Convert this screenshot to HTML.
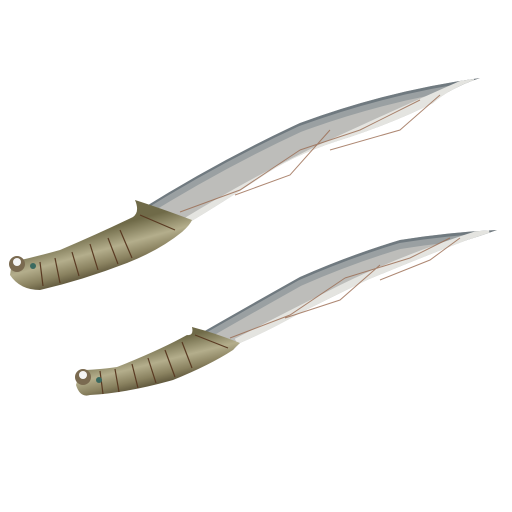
<!DOCTYPE html>
<html><head><meta charset="utf-8"><style>html,body{margin:0;padding:0;background:#fff;width:512px;height:512px;overflow:hidden}</style></head>
<body>
<svg width="512" height="512" viewBox="0 0 512 512" xmlns="http://www.w3.org/2000/svg">
<defs>
<clipPath id="c1"><path d="M135,200 L140,210 Q220,160 300,123 Q390,90 480,78 Q450,88 433,103 Q400,120 350,137 Q300,152 267,173 Q230,198 190,222 L182,232 Z"/></clipPath>
<clipPath id="c2"><path d="M192,327 L196,336 Q250,305 300,277 Q350,255 400,240 Q450,232 497,230 Q480,236 467,240 Q420,258 367,280 Q330,298 300,313 Q270,330 240,343 L233,350 Z"/></clipPath>
<linearGradient id="hd1" gradientUnits="userSpaceOnUse" x1="92" y1="232" x2="104" y2="275">
<stop offset="0" stop-color="#6f6a48"/><stop offset="0.45" stop-color="#b4ae8c"/><stop offset="0.75" stop-color="#8a8260"/><stop offset="1" stop-color="#5a5238"/>
</linearGradient>
<linearGradient id="hd2" gradientUnits="userSpaceOnUse" x1="150" y1="345" x2="160" y2="385">
<stop offset="0" stop-color="#6f6a48"/><stop offset="0.45" stop-color="#b4ae8c"/><stop offset="0.75" stop-color="#8a8260"/><stop offset="1" stop-color="#5a5238"/>
</linearGradient>
</defs>
<!-- sword 1 -->
<g clip-path="url(#c1)">
<rect x="130" y="70" width="360" height="170" fill="#bdbdba"/>
<path d="M140,210 Q220,160 300,123 Q390,90 480,78" stroke="#707a80" stroke-width="12" fill="none"/>
<path d="M140,216 Q220,166 300,129 Q390,96 480,84" stroke="#9aa0a2" stroke-width="6" fill="none"/>
<path d="M185,226 Q250,186 320,152 Q400,115 475,82" stroke="#e4e4e0" stroke-width="14" fill="none"/>
</g>
<path d="M180,212 L240,190 L300,150 M235,195 L290,175 L330,130 M300,150 L360,130 L420,100 M330,150 L400,130 L440,95" stroke="#9a6a50" stroke-width="1" fill="none" opacity="0.8"/>
<path d="M135,200 Q140,212 133,217 Q100,233 60,250 Q35,257 12,262 L10,275 Q20,290 40,290 Q83,280 127,263 Q160,250 182,232 Q190,225 192,220 Q160,208 135,200 Z" fill="url(#hd1)"/>
<g stroke="#5a3a22" stroke-width="1.2" fill="none">
<path d="M40,262 L43,286 M55,258 L60,283 M72,252 L79,276 M90,244 L98,270 M108,238 L118,264 M120,230 L132,258 M140,215 L175,230"/>
</g>
<circle cx="17" cy="264" r="8" fill="#7a6a50"/>
<circle cx="17" cy="262" r="4" fill="#f4f4f4"/>
<circle cx="33" cy="266" r="3" fill="#3a6a60"/>
<!-- sword 2 -->
<g clip-path="url(#c2)">
<rect x="185" y="220" width="320" height="140" fill="#bdbdba"/>
<path d="M196,336 Q250,305 300,277 Q350,255 400,240 Q450,232 497,230" stroke="#707a80" stroke-width="12" fill="none"/>
<path d="M196,342 Q250,311 300,283 Q350,261 400,246 Q450,238 497,236" stroke="#9aa0a2" stroke-width="6" fill="none"/>
<path d="M238,345 Q290,318 330,298 Q400,262 490,234" stroke="#e4e4e0" stroke-width="14" fill="none"/>
</g>
<path d="M230,338 L290,315 L345,278 M285,318 L340,300 L380,265 M345,278 L410,258 L450,238 M380,280 L430,260 L460,238" stroke="#9a6a50" stroke-width="1" fill="none" opacity="0.8"/>
<path d="M192,327 Q194,336 187,335 Q160,350 117,367 Q95,370 80,370 L76,385 Q80,398 90,395 Q127,393 173,380 Q210,365 233,350 Q236,346 240,343 Q215,333 192,327 Z" fill="url(#hd2)"/>
<g stroke="#5a3a22" stroke-width="1.2" fill="none">
<path d="M100,371 L103,394 M115,369 L119,392 M132,364 L138,388 M148,358 L156,383 M165,350 L175,377 M182,342 L192,368 M195,335 L228,348"/>
</g>
<circle cx="83" cy="377" r="8" fill="#7a6a50"/>
<circle cx="83" cy="375" r="4" fill="#f4f4f4"/>
<circle cx="99" cy="380" r="3" fill="#3a6a60"/>
</svg>
</body></html>
